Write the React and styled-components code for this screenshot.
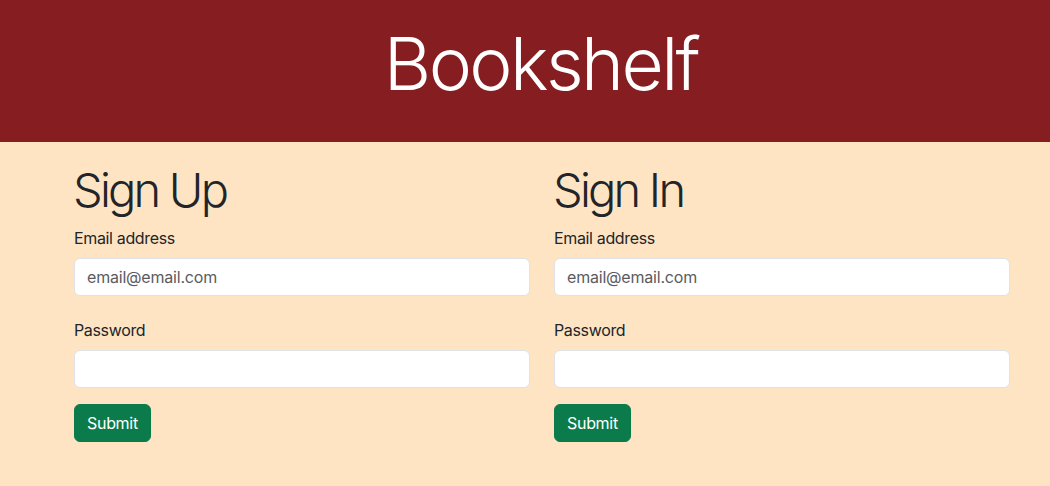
import React from 'react'
import styled, { createGlobalStyle } from 'styled-components';

const GlobalStyle = createGlobalStyle`
  * { box-sizing: border-box; }
  html, body {
    margin: 0;
    padding: 0;
    background: #ffe4c4;
    font-family: Inter, "Noto Sans", sans-serif;
    color: #212529;
  }
`

const Page = styled.div`
  min-height: 486px;
  background: #ffe4c4;
`

const Header = styled.header`
  background: #861e21;
  height: 142px;
  padding: 20px 0 0 32px;
  text-align: center;
`

const Brand = styled.h1`
  margin: 0;
  color: #fff;
  font-size: 73px;
  font-weight: 300;
  line-height: 1.2;
  letter-spacing: -2.6px;
`

const Forms = styled.main`
  display: grid;
  grid-template-columns: 456px 456px;
  column-gap: 24px;
  padding: 20px 0 0 74px;
`

const Form = styled.form`
  display: flex;
  flex-direction: column;
  align-items: flex-start;
`

const Title = styled.h2`
  margin: 0 0 8px -1px;
  font-size: 47px;
  font-weight: 300;
  line-height: 1.2;
  letter-spacing: -2.8px;
`

const Field = styled.div`
  width: 100%;
  margin-bottom: ${props => props.last ? '16px' : '22px'};
`

const Label = styled.label`
  display: block;
  font-size: 16px;
  line-height: 24px;
  letter-spacing: -0.35px;
  margin-bottom: 8px;
`

const Input = styled.input`
  display: block;
  width: 100%;
  height: 38px;
  padding: 6px 12px;
  font-family: inherit;
  font-size: 16px;
  letter-spacing: -0.2px;
  color: #212529;
  background: #fff;
  border: 1px solid #dee2e6;
  border-radius: 6px;
  outline: none;
  &::placeholder { color: #595c5f; }
`

const Button = styled.button`
  height: 38px;
  padding: 6px 12px;
  font-family: inherit;
  font-size: 16px;
  letter-spacing: -0.3px;
  color: #fff;
  background: #0c7b4c;
  border: 1px solid #0c7b4c;
  border-radius: 6px;
  cursor: pointer;
`

const AuthForm = ({ title }) => (
  <Form onSubmit={e => e.preventDefault()}>
    <Title>{title}</Title>
    <Field>
      <Label>Email address</Label>
      <Input type="email" placeholder="email@email.com" />
    </Field>
    <Field last>
      <Label>Password</Label>
      <Input type="password" />
    </Field>
    <Button type="submit">Submit</Button>
  </Form>
)

const App = () => (
  <Page>
    <GlobalStyle />
    <Header>
      <Brand>Bookshelf</Brand>
    </Header>
    <Forms>
      <AuthForm title="Sign Up" />
      <AuthForm title="Sign In" />
    </Forms>
  </Page>
)

export default App
